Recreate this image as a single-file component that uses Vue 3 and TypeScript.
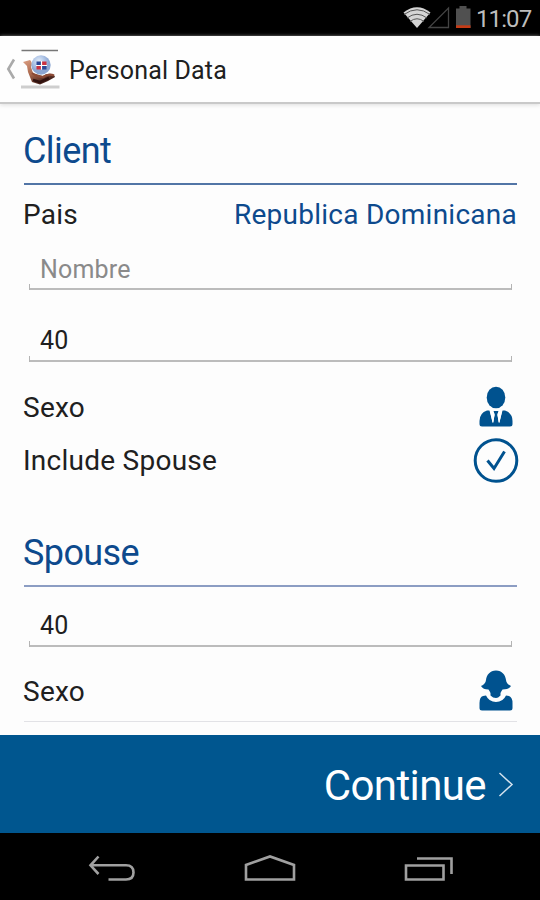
<script setup lang="ts">
import { ref } from 'vue'

const country = ref('Republica Dominicana')
const clientName = ref('')
const clientAge = ref('40')
const spouseAge = ref('40')
const includeSpouse = ref(true)
</script>

<template>
  <div class="screen">
    <div class="status">
      <svg class="status-icons" width="72" height="36" viewBox="0 0 72 36">
        <path d="M3.500 12.500 Q17 2 30.500 12.500 L17 28Z" fill="#d4d4d4" />
        <g fill="none" stroke="#555" stroke-width="1">
          <path d="M4 14.500 Q17 5 30 14.500" />
          <path d="M7 18 Q17 10.500 27 18" />
          <path d="M10 21.500 Q17 16 24 21.500" />
        </g>
        <path d="M29 27.500 H48.500 V8Z" fill="none" stroke="#444" stroke-width="1.300" />
        <path d="M56 8.500h3.500V6h7v2.500h4V28H56z" fill="#505050" />
        <path d="M56 25.300h14.500V28H56z" fill="#c43b16" />
      </svg>
      <span class="clock">11:07</span>
    </div>

    <header class="appbar">
      <svg class="back" width="12" height="24" viewBox="0 0 12 24">
        <path d="M10 2.500 L4.300 12 L10 21.500" fill="none" stroke="#aaa" stroke-width="2.600" />
      </svg>
      <svg class="logo" width="40" height="42" viewBox="0 0 40 42">
        <defs>
          <radialGradient id="globe" cx="40%" cy="30%">
            <stop offset="0" stop-color="#e3edfa" />
            <stop offset=".65" stop-color="#a9c0e4" />
            <stop offset="1" stop-color="#8ca6d2" />
          </radialGradient>
          <linearGradient id="hand" x1="0" y1="0" x2=".7" y2="1">
            <stop offset="0" stop-color="#dda084" />
            <stop offset=".5" stop-color="#a9674c" />
            <stop offset="1" stop-color="#351713" />
          </linearGradient>
        </defs>
        <path d="M1.500 2.500h36.500" stroke="#777" stroke-width="1.400" />
        <path d="M1 39h38.500" stroke="#cecece" stroke-width="3.200" />
        <path d="M3 14 L10 12 Q13 15 11 19 L13 25 L23 28 Q28 24 34 27 L35 29 L28 33 L20 36.500 L12 34 L8 24 L7 18Z" fill="url(#hand)" />
        <circle cx="21" cy="17" r="9.700" fill="url(#globe)" />
        <path d="M16.500 13.500h4.500v3.500h-4.500zM22 18h4.500v3.500H22z" fill="#2b4796" />
        <path d="M22 13.500h4.500v3.500H22zM16.500 18h4.500v3.500h-4.500z" fill="#cc3140" />
        <path d="M21.500 13v8.500M16 17.500h11" stroke="#fff" stroke-width="1.200" />
        <path d="M12 25 Q17 29 23 29 Q29 25 34 27.500" fill="none" stroke="#8d4b36" stroke-width="2.200" />
        <path d="M13 32 L20 34 L29 30" fill="none" stroke="#30120f" stroke-width="2.600" />
      </svg>
      <h1 class="title">Personal Data</h1>
    </header>

    <main class="form">
      <h2 class="heading client">Client</h2>
      <div class="row country">
        <span class="label pais">Pais</span>
        <span class="value">{{ country }}</span>
      </div>
      <div class="field first"><input v-model="clientName" type="text" placeholder="Nombre" /></div>
      <div class="field second"><input v-model="clientAge" type="text" /></div>
      <div class="row sex">
        <span class="label sexo">Sexo</span>
        <svg class="person" width="36" height="42" viewBox="0 0 36 42">
          <ellipse cx="18" cy="11.500" rx="9.300" ry="10.800" />
          <path d="M9 24.500 H11.500 L14.800 37 L16.700 29 L15.500 25 H20.500 L19.300 29 L21.200 37 L24.500 24.500 H27 Q34.500 27 34.500 35 V38 Q34.500 40.500 32 40.500 H4 Q1.500 40.500 1.500 38 V35 Q1.500 27 9 24.500Z" />
          <path d="M11.700 24 H14.500 L16.500 28 L15.500 36.500 H14.500Z M24.300 24 H21.500 L19.500 28 L20.500 36.500 H21.500Z" fill="#fff" />
        </svg>
      </div>
      <div class="row include" @click="includeSpouse = !includeSpouse">
        <span class="label spouse-label">Include Spouse</span>
        <svg class="check" width="46" height="46" viewBox="0 0 46 46">
          <circle cx="23" cy="22.500" r="20.800" fill="none" stroke="#00528f" stroke-width="3" />
          <path v-if="includeSpouse" d="M14.500 22.500 L21 30.500 L31.500 13.500" fill="none" stroke="#00528f" stroke-width="3" />
        </svg>
      </div>

      <h2 class="heading spouse">Spouse</h2>
      <div class="field third"><input v-model="spouseAge" type="text" /></div>
      <div class="row sex last">
        <span class="label sexo">Sexo</span>
        <svg class="person" width="36" height="42" viewBox="0 0 36 42">
          <path d="M18 .5 C24 .5 27.500 5 28 10 Q28.500 14 33 16 Q31 19.500 24.500 19.500 Q23 21.500 22.500 23 V25.500 Q20 28 18 28 Q15 28 12.500 25.500 V23 Q12 21.500 10.500 19.500 Q5 19.500 3 16 Q7.500 14 8 10 C8.500 5 12 .5 18 .5Z" />
          <path d="M8 25.500 Q11 32 18 32 Q25 32 28 25.500 L31 26 Q34.500 27.500 34.500 33 V38 Q34.500 40.500 32 40.500 H4 Q1.500 40.500 1.500 38 V33 Q1.500 27 5 26Z" />
        </svg>
      </div>
    </main>

    <button class="continue" type="button">
      <span class="continue-text">Continue</span>
      <svg width="16" height="26" viewBox="0 0 16 26">
        <path d="M1.500 1 L14 12.500 L1.500 24" fill="none" stroke="#d3e2ee" stroke-width="1.500" />
      </svg>
    </button>

    <nav class="nav">
      <svg width="48" height="28" viewBox="0 0 48 28">
        <path d="M10.500 1.500 L2.500 10.300 L10.500 19 M2.500 10.300 H38 Q45.500 10.300 45.500 17.500 Q45.500 24.500 38 24.500 H20.500" />
      </svg>
      <svg width="52" height="28" viewBox="0 0 52 28">
        <path d="M2 24.500 V10 L26 1.500 L50 10 V24.500Z" />
      </svg>
      <svg width="50" height="28" viewBox="0 0 50 28">
        <path d="M2 10.500 H39.500 V24.500 H2Z M13 3.500 H47.500 V19" />
      </svg>
    </nav>
  </div>
</template>

<style>
body {
  margin: 0;
  background: #fdfdfd;
}
</style>

<style scoped>
.screen {
  width: 540px;
  height: 900px;
  display: flex;
  flex-direction: column;
  overflow: hidden;
  background: #fdfdfd;
  color: #202020;
  font-family: Roboto, "Liberation Sans", sans-serif;
}
.status {
  height: 36px;
  flex: none;
  display: flex;
  align-items: center;
  justify-content: flex-end;
  padding-right: 8px;
  background: #000;
}
.clock {
  width: 56px;
  margin-left: 4px;
  padding-top: 1px;
  color: #bdbdbd;
  font-size: 24px;
  line-height: 34px;
  letter-spacing: -0.9px;
  white-space: nowrap;
}
.appbar {
  height: 66px;
  flex: none;
  display: flex;
  align-items: center;
  padding-left: 4px;
  background: #fefefe;
  border-bottom: 2px solid #c9c9c9;
  box-shadow: 0 1px 4px #ddd;
}
.logo {
  margin: 0 9px 0 4px;
}
.title {
  margin: 4px 0 0;
  font-size: 25px;
  font-weight: 400;
  line-height: 30px;
  letter-spacing: 0.15px;
}
.form {
  height: 631px;
  flex: none;
  box-sizing: border-box;
  padding: 13px 23px 0 24px;
}
.heading {
  margin: 0;
  height: 64px;
  padding-top: 2px;
  font-size: 36px;
  line-height: 64px;
  font-weight: 400;
  letter-spacing: -0.6px;
  text-indent: -1px;
  color: #0d4a8d;
  border-bottom: 2px solid #5275a6;
}
.heading.spouse {
  margin-top: 32px;
  border-bottom-color: #8c9dc3;
}
.row {
  display: flex;
  align-items: center;
  justify-content: space-between;
  font-size: 28px;
  font-weight: 400;
  letter-spacing: 0.25px;
}
.label,
.value {
  margin-left: -1px;
  padding-top: 1px;
}
.spouse-label {
  padding: 0 0 1px;
}
.country {
  height: 58px;
}
.value {
  color: #0d4a8d;
}
.field {
  display: flex;
  box-sizing: border-box;
  height: 47px;
  margin: 0 5px;
  background:
    linear-gradient(#b4b4b4, #b4b4b4) left bottom / 1px 6px no-repeat,
    linear-gradient(#b4b4b4, #b4b4b4) right bottom / 1px 6px no-repeat,
    linear-gradient(#bcbcbc, #bcbcbc) left bottom / 100% 2px no-repeat;
}
.field.second {
  margin-top: 25px;
}
.field.third {
  margin-top: 13px;
}
.field input {
  flex: 1;
  min-width: 0;
  border: 0;
  outline: 0;
  padding: 4px 11px 0;
  background: transparent;
  color: #202020;
  font-family: inherit;
  font-size: 25px;
  letter-spacing: 0.2px;
}
.field.first input {
  padding-top: 5px;
}
.field input::placeholder {
  color: #8a8a8a;
  opacity: 1;
}
.sex {
  height: 54px;
  margin-top: 18px;
}
.include {
  height: 53px;
}
.last {
  margin-top: 17px;
  padding-bottom: 3px;
  border-bottom: 1px solid #e2e2e6;
}
.person {
  margin-right: 3px;
  fill: #00528f;
}
.check {
  margin-right: -2px;
}
.continue {
  height: 98px;
  flex: none;
  display: flex;
  align-items: center;
  justify-content: flex-end;
  gap: 12px;
  padding: 1px 26px 0 0;
  border: 0;
  background: #00568f;
  color: #fff;
  font-family: inherit;
  font-size: 42px;
}
.continue-text {
  padding-top: 2px;
  letter-spacing: -0.6px;
}
.nav {
  height: 67px;
  flex: none;
  display: flex;
  align-items: center;
  justify-content: space-between;
  box-sizing: border-box;
  padding: 4px 86px 0 88px;
  background: #000;
}
.nav path {
  fill: none;
  stroke: #a0a0a0;
  stroke-width: 2.6px;
}
</style>
